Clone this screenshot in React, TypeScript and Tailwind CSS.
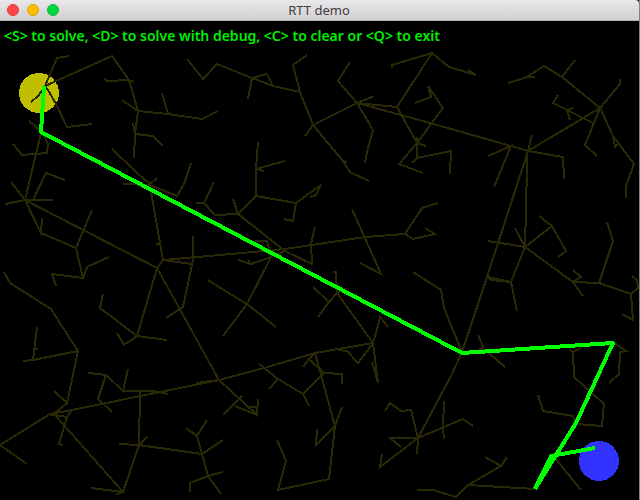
const BRANCHES: string[] = [
  // upper left
  "69,56 57,58 45,86 112,56 129,80 138,111 135,134 134,158",
  "105,79 107,81 129,80 134,82",
  "122,100 138,111 168,114 202,119 218,111",
  "162,93 168,114",
  "133,123 135,134 153,136 163,146",
  "31,102 38,96 44,88",
  "45,86 48,90 56,104 67,127 92,124",
  "29,121 42,132 48,144 47,153 22,155 13,144",
  "41,133 25,200",
  "187,59 203,79 217,64 252,78 273,86 300,92",
  "248,99 252,78 267,74 273,86",
  "112,149 134,170 146,181 151,184",
  "191,163 184,184 177,196 150,185 123,184",
  "150,184 157,178",
  // upper middle
  "307,55 293,65 300,92 313,125 343,161 350,172 369,181",
  "343,161 347,162",
  "305,136 313,125 357,103 374,96",
  "350,62 338,81 357,103 373,130 367,152 365,163",
  "357,103 397,107 432,53 449,67 476,75 468,70",
  "357,103 430,123 511,146 528,151",
  "392,68 392,65 432,53",
  "397,107 417,143",
  "423,173 399,164 417,143 443,108 428,86 431,97 415,103",
  "429,86 431,97",
  "417,137 417,158 412,163",
  "417,158 451,151 450,174",
  "417,143 426,146",
  "258,142 256,169 285,161",
  "256,169 264,171",
  "256,169 256,196",
  // upper right
  "508,83 528,77 535,77",
  "525,78 544,66 562,77 600,108 620,84 620,79",
  "575,60 562,77",
  "558,95 553,103 567,110 593,123",
  "574,108 567,110 570,120",
  "528,151 600,108 585,145 597,156",
  "600,108 613,136 634,164 626,186 626,198",
  "613,136 615,147 618,144",
  "532,135 528,151 563,157 564,179",
  "488,156 511,146 494,187",
  "528,151 487,277 462,352",
  "527,151 527,167 525,247",
  // middle left
  "11,182 25,200",
  "5,204 25,200 53,200",
  "33,200 46,173 65,180",
  "25,200 41,233 42,218",
  "41,233 76,248 92,210",
  "76,248 83,278 52,274 56,286",
  "83,278 87,267 109,257",
  "25,200 157,268 163,260 151,192",
  "156,245 159,243",
  "192,264 163,260 220,255 285,249 365,237 405,234 413,239 435,234 425,228",
  "193,236 193,260 183,307 166,318",
  "4,272 10,283 51,309 78,351",
  "103,294 100,308 137,336",
  "157,268 137,336 167,340",
  "137,336 124,345 117,333",
  "157,268 219,380",
  "214,182 204,203 196,203",
  "204,203 215,215 238,214 233,199",
  "238,214 256,196 296,203 321,185 316,195 310,197",
  "296,203 293,221 284,219",
  // centre
  "238,214 285,251 312,264 311,244 315,227",
  "208,280 222,289 247,304 276,327",
  "255,241 267,241 271,257 247,304 223,336",
  "285,251 271,257 251,264 238,260",
  "248,260 251,264",
  "352,209 381,274 360,263",
  "313,287 329,302 318,317",
  "329,302 337,293 336,272 333,272",
  "337,293 347,288",
  "337,293 373,343",
  "405,234 422,208 438,203",
  "413,272 441,290 444,308 462,352",
  "388,327 380,317 376,333 373,343",
  // middle right
  "488,241 525,247 515,228",
  "525,247 552,226 539,216",
  "552,226 566,251 558,257",
  "525,247 511,282 517,311",
  "511,282 487,277 491,280 511,282",
  "525,247 573,282 583,296",
  "573,282 581,277 573,270",
  "573,282 599,283 613,241 607,222",
  "599,283 631,294 638,288 637,280 632,276",
  "631,294 633,320 622,314",
  // lower left
  "37,327 33,360",
  "35,349 38,349",
  "23,361 33,360 78,351 67,403 54,391",
  "67,403 55,413",
  "27,464 0,445 50,414 72,410 219,380 264,368 315,353 373,343",
  "50,415 55,415 123,492 91,488",
  "116,494 123,492 139,445 140,392",
  "119,444 139,445 147,437",
  "139,445 202,454 197,436 186,428",
  "197,436 207,420",
  "202,454 223,440",
  "202,454 208,476 190,483 190,492",
  "223,472 208,476 221,494",
  "55,415 67,417 72,410",
  "67,417 59,444 63,445",
  "88,373 106,375 123,391 128,369",
  "123,391 154,391 168,394",
  "106,375 98,399 112,412",
  "151,394 154,391",
  "196,383 219,380",
  // lower middle
  "219,380 257,415 258,399",
  "235,406 257,415",
  "248,407 257,407",
  "242,396 223,415",
  "259,364 278,379 269,389",
  "278,379 303,394 309,406",
  "303,394 324,373 342,374 342,384",
  "324,373 309,359 303,367",
  "309,359 315,353 335,426 342,407",
  "335,426 316,445 317,429",
  "335,426 329,479 278,490 286,461 277,440",
  "338,350 347,351 358,363 373,343 378,383 372,362",
  "385,411 390,403 401,411 411,410 418,438 390,438 401,447",
  "418,438 380,467 382,454",
  "418,438 417,454",
  "418,438 452,374 462,352",
  "418,438 463,419 473,426",
  // lower right
  "417,490 433,490 456,497 468,485 501,466 507,457",
  "501,466 485,457",
  "468,485 535,489",
  "444,401 443,428 444,439",
  "478,335 484,349 489,353 505,367",
  "479,349 484,349",
  "570,350 573,352 581,348",
  "573,352 574,377 604,404 602,426 577,424 573,416 543,411 538,395",
  "614,343 626,351 620,352 619,374 609,383",
  "555,458 581,490",
];

const SOLUTION = [
  "44,86 41,132 462,353 613,343 576,423 556,455 535,489",
  "535,489 551,456 595,448",
];

const LIGHTS = [
  { label: "Close", style: "bg-[#ff4644] border-[#e2393a]" },
  { label: "Minimize", style: "bg-[#ffbd00] border-[#e0a010]" },
  { label: "Zoom", style: "bg-[#00d742] border-[#12b53a]" },
];

function TitleBar() {
  return (
    <header className="grid h-[21px] grid-cols-[1fr_auto_1fr] items-center rounded-tr-sm border-b border-[#b4b2b4] bg-linear-to-b from-[#e9e7e9] to-[#d2d0d2] pr-2 pl-[7px]">
      <div className="flex gap-2">
        {LIGHTS.map((light) => (
          <button
            key={light.label}
            type="button"
            aria-label={light.label}
            className={`size-3 rounded-full border ${light.style}`}
          />
        ))}
      </div>
      <h1 className="font-['Noto_Sans',sans-serif] text-[13px] leading-5 text-[#403e40]">RTT demo</h1>
    </header>
  );
}

function TreeCanvas() {
  return (
    <svg
      viewBox="0 51 639 449"
      className="block w-full"
      fill="none"
      shapeRendering="crispEdges"
      role="img"
      aria-label="Search tree and solved path"
    >
      <circle cx="39" cy="93" r="20" fill="#bfbf00" />
      <circle cx="599" cy="461" r="20" fill="#3333ff" />
      <g stroke="#292906" strokeWidth="2">
        {BRANCHES.map((points, i) => (
          <polyline key={i} points={points} />
        ))}
      </g>
      <g stroke="#00ff00" strokeWidth="4">
        {SOLUTION.map((points, i) => (
          <polyline key={i} points={points} strokeLinejoin="round" />
        ))}
      </g>
    </svg>
  );
}

export default function App() {
  return (
    <div className="min-h-screen bg-[#808285] pr-px">
      <div className="bg-[#1c1e2a]">
        <TitleBar />
      </div>
      <main className="bg-black">
        <p className="h-[30px] px-1 font-['Noto_Sans','Open_Sans',sans-serif] text-[14px] leading-[30px] font-semibold whitespace-nowrap text-[#00ee00]">
          {"<S> to solve, <D> to solve with debug, <C> to clear or <Q> to exit"}
        </p>
        <TreeCanvas />
      </main>
    </div>
  );
}
